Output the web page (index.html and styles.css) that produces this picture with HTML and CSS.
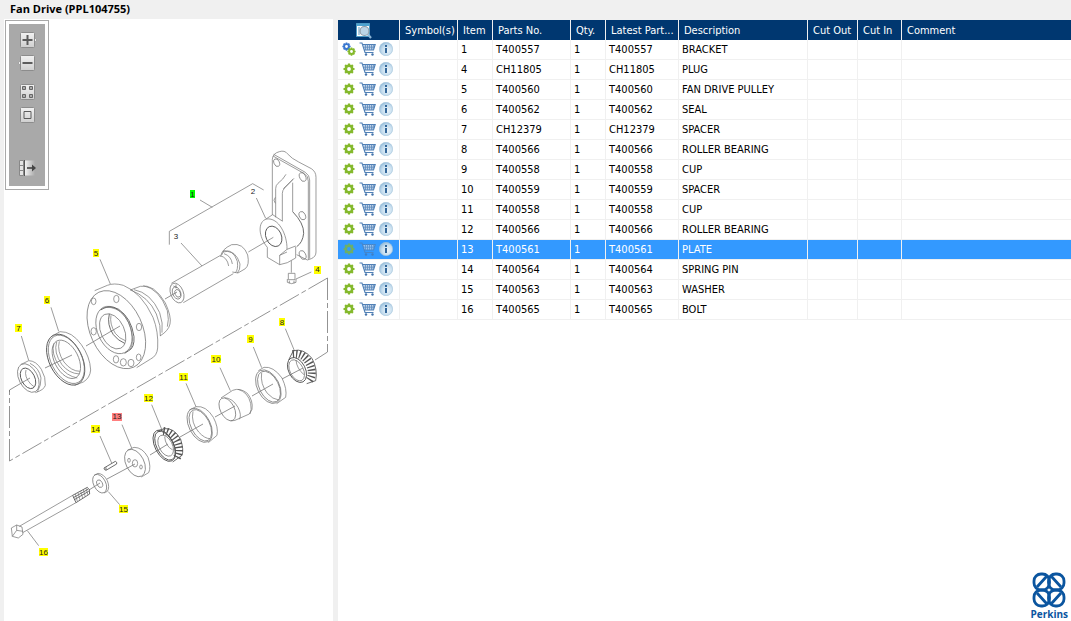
FILE: index.html
```html
<!DOCTYPE html>
<html lang="en">
<head>
<meta charset="utf-8">
<title>Fan Drive (PPL104755)</title>
<link rel="stylesheet" href="styles.css">
</head>
<body>
<svg class="sprite" aria-hidden="true">
  <defs>
    <linearGradient id="btn" x1="0" y1="0" x2="0" y2="1"><stop offset="0" stop-color="#f2f2f2"/><stop offset="1" stop-color="#cfcfcf"/></linearGradient>
    <linearGradient id="fade"><stop offset="0" stop-color="#f2f2f2"/><stop offset="1" stop-color="#a9a9a9"/></linearGradient>
    <radialGradient id="ball" cx=".6" cy=".6" r=".65"><stop offset="0" stop-color="#eef6fb"/><stop offset=".6" stop-color="#c5ddee"/><stop offset="1" stop-color="#8fb8d8"/></radialGradient>
  </defs>
  <symbol id="gear" viewBox="0 0 12 12">
    <circle cx="6" cy="6" r="3.200" fill="none" stroke="currentColor" stroke-width="2.600"/>
    <path d="M6 .5V3M6 9v2.500M.5 6H3M9 6h2.500M2.100 2.100l1.800 1.800M8.100 8.100l1.800 1.800M9.900 2.100L8.100 3.900M3.900 8.100L2.100 9.900" stroke="currentColor" stroke-width="2.200"/>
  </symbol>
  <symbol id="cart" viewBox="0 0 17 14">
    <path d="M4 2.500h12l-1.500 5.500H5.500z" fill="#c3d4e8"/>
    <path d="M.5 1h2.500L6 10.500h8.500M4 2.500h12.200L14.500 8H5.500" fill="none" stroke="#4f7fb5" stroke-width="1.100"/>
    <path d="M6.500 2.500v5.500M8.500 2.500v5.500M10.500 2.500v5.500M12.500 2.500v5.500M14.500 2.500L14 8M4.500 5.200h11" fill="none" stroke="#5e8bbd" stroke-width=".8"/>
    <circle cx="7" cy="12.500" r="1.200" fill="#4474ab"/><circle cx="13.500" cy="12.500" r="1.200" fill="#4474ab"/>
  </symbol>
  <symbol id="info" viewBox="0 0 14 14">
    <circle cx="7" cy="7" r="6.700" fill="url(#ball)" stroke="#a5c4dc" stroke-width=".6"/>
    <path d="M6 3h2v2H6zM6 6h2v5H6z" fill="#34689b"/>
  </symbol>
</svg>

<div class="app">
  <h1 class="title">Fan Drive (PPL104755)</h1>
  <main class="panes">
    <section class="drawing" aria-label="Exploded drawing">
      <svg class="sheet" viewBox="4 19 329 602" role="img" aria-label="Fan drive parts">
        <g class="line">
          <path class="chain" d="M327.500 278V352M327.500 278L9.500 461M9.500 461V390"/>
          <path d="M327.500 352L315 360M9.500 392v-2L30 378"/>
          <path d="M303 368L282 379M273 384L252 396M235 406L215 417M203 424L180 437M168 444L150 455M135 464L107 479M100 483L89 490M45 368L72 355M86 346L120 326M165 299L177 292"/>
        </g>

        <g class="line big" transform="translate(150 140) scale(.33333)">
          <path d="M58 314V274L308 131l33 19M150 180l37 22M319 174l28 61M93 309l63 69M295 336l75-44M424 362v36M438 417l46-21"/>
          <path d="M367 225V58Q368 40 388 35Q404 30 412 41Q425 56 446 66L484 86Q498 95 498 112V336Q498 350 484 356L472 360L440 344M369 48L463 101Q475 108 475 124V358M371 43L466 97Q479 106 479 120V356"/>
          <ellipse cx="380" cy="68" rx="8" ry="12" transform="rotate(-25 380 68)"/>
          <ellipse cx="458" cy="111" rx="9" ry="14" transform="rotate(-25 458 111)"/>
          <ellipse cx="457" cy="227" rx="9" ry="13" transform="rotate(-25 457 227)"/>
          <ellipse cx="458" cy="345" rx="9" ry="14" transform="rotate(-25 458 345)"/>
          <path d="M376 172q-8 8 0 18M408 103Q400 118 384 130Q377 136 377 146V232M432 115L404 144Q397 151 397 160V243M429 118L400 146M428 128V215"/>
          <path class="dark" d="M428 215Q462 250 461 280Q458 308 440 320"/>
          <path d="M352 322C325 290 322 244 350 237C386 232 412 284 411 328L389 346V374L352 352V322M348 237L368 224L398 244M411 328L437 318M389 374L412 368L437 354V320M389 346L411 336"/>
          <ellipse class="dark" cx="371" cy="289" rx="23" ry="32" transform="rotate(-25 371 289)"/>
          <path d="M415 400h20v19h-20zM412 417v10q13 8 26 0v-10M418 422v8M432 422v8"/>
          <path d="M64 430L210 347M100 488L250 401M212 350Q214 328 245 314Q280 308 293 345Q299 375 286 386L264 399L247 396M215 345L222 332Q258 330 270 372Q271 390 262 399M218 336Q250 326 262 364Q265 390 256 398M210 347Q232 352 236 378M222 341Q244 348 247 372"/>
          <ellipse cx="81" cy="459" rx="19" ry="31" transform="rotate(-22 81 459)"/>
          <ellipse cx="80" cy="459" rx="12" ry="19" transform="rotate(-22 80 459)"/>
          <ellipse cx="83" cy="460" rx="8" ry="12" transform="rotate(-22 83 460)"/>
          <path d="M70 438l12 5M78 433v12"/>
        </g>

        <g class="line big" transform="translate(0 240) scale(.33333)">
          <path d="M300 58l31 74M153 202l23 72M64 288l22 73"/>
          <ellipse cx="349" cy="269" rx="78" ry="124" transform="rotate(-25 349 269)"/>
          <path d="M284 152L322 136Q342 128 370 136Q425 158 459 232Q476 275 473 324Q471 348 452 357L410 383M391 150L421 139Q462 130 496 189Q515 230 510 252Q506 272 480 288M391 150Q446 170 469 222Q484 258 481 288M402 149Q452 158 479 218Q490 250 486 278M430 137Q478 146 502 212Q508 240 502 260"/>
          <ellipse cx="342" cy="270" rx="49" ry="75" transform="rotate(-25 342 270)"/>
          <path class="dark" d="M302 210Q326 192 356 208Q394 234 402 290Q404 324 386 332L374 340"/>
          <path d="M308 205Q332 196 360 214Q392 240 397 292Q399 318 388 331"/>
          <ellipse cx="338" cy="274" rx="35" ry="56" transform="rotate(-25 338 274)"/>
          <path class="dark" d="M328 222Q320 254 340 284Q354 302 374 310"/>
          <path d="M333 226Q328 252 346 280Q358 296 376 302"/>
          <g><ellipse cx="281" cy="184" rx="7" ry="10"/><ellipse cx="349" cy="177" rx="8" ry="11"/><ellipse cx="417" cy="261" rx="8" ry="11"/><ellipse cx="281" cy="274" rx="8" ry="11"/><ellipse cx="348" cy="358" rx="8" ry="11"/><ellipse cx="370" cy="367" rx="9" ry="11"/><ellipse cx="393" cy="369" rx="9" ry="11"/><ellipse cx="416" cy="352" rx="7" ry="10"/></g>
          <ellipse class="dark" cx="197" cy="359" rx="49" ry="82" transform="rotate(-27 197 359)"/>
          <ellipse cx="199" cy="358" rx="46" ry="78" transform="rotate(-27 199 358)"/>
          <ellipse cx="199" cy="358" rx="36" ry="62" transform="rotate(-27 199 358)"/>
          <path d="M155 289L180 275Q216 274 244 314Q270 350 272 390Q270 414 250 426L224 436M162 310Q152 340 178 378Q200 408 232 414M170 306Q160 338 186 374Q206 400 238 402M178 304Q170 334 192 366Q214 394 240 394"/>
          <ellipse cx="85" cy="414" rx="28" ry="46" transform="rotate(-27 85 414)"/>
          <ellipse class="dark" cx="84" cy="415" rx="20" ry="33" transform="rotate(-27 84 415)"/>
          <path d="M62 374L86 362Q108 362 124 388Q138 412 136 436Q132 450 106 458M78 390Q72 410 92 432L102 440M90 370Q118 384 123 414Q124 436 112 456"/>
        </g>

        <g class="line big" transform="translate(160 310) scale(.33333)">
          <path d="M376 56l28 68M280 111l25 62M180 173l31 69M78 220l30 70"/>
          <path class="rollers" d="M398 132Q430 128 448 160Q464 192 446 213"/>
          <path class="dark" d="M386 150L400 122Q430 114 456 145Q474 178 467 212L440 221"/>
          <ellipse class="dark" cx="411" cy="180" rx="25" ry="40" transform="rotate(-27 411 180)"/>
          <ellipse cx="410" cy="181" rx="20" ry="34" transform="rotate(-27 410 181)"/>
          <path d="M408 150Q410 176 432 194"/>
          <ellipse cx="325" cy="230" rx="33" ry="54" transform="rotate(-27 325 230)"/>
          <ellipse cx="327" cy="230" rx="29" ry="50" transform="rotate(-27 327 230)"/>
          <path d="M295 182L312 172Q340 168 366 204Q382 238 377 262L350 281M305 188Q300 222 322 250Q338 268 356 270"/>
          <ellipse cx="202" cy="298" rx="21" ry="37" transform="rotate(-27 202 298)"/>
          <path d="M183 264L218 241Q240 232 262 250Q280 272 276 298L268 312L225 331L212 333M193 263Q218 264 234 292Q246 316 238 328M234 238Q264 246 272 280Q276 300 270 312"/>
          <ellipse cx="119" cy="346" rx="32" ry="55" transform="rotate(-27 119 346)"/>
          <ellipse cx="121" cy="346" rx="28" ry="51" transform="rotate(-27 121 346)"/>
          <path d="M88 300L108 290Q138 286 160 322Q176 352 171 376L145 398M99 304Q92 338 116 366Q134 386 150 386"/>
        </g>

        <g class="line big" transform="translate(0 390) scale(.33333)">
          <path d="M455 44l31 76M366 104l29 70M300 138l35 81M325 305l34 39M82 422l34 45"/>
          <path class="rollers" d="M490 123Q516 126 531 154Q544 184 528 207"/>
          <path class="dark" d="M472 124L492 116Q522 112 542 148Q552 180 546 196L518 216"/>
          <ellipse class="dark" cx="493" cy="167" rx="28" ry="51" transform="rotate(-27 493 167)"/>
          <ellipse class="dark" cx="495" cy="167" rx="25" ry="47" transform="rotate(-27 495 167)"/>
          <ellipse cx="497" cy="167" rx="20" ry="34" transform="rotate(-27 497 167)"/>
          <path d="M494 140Q496 168 518 180"/>
          <ellipse cx="405" cy="219" rx="27" ry="44" transform="rotate(-27 405 219)"/>
          <path d="M382 181L402 172Q428 172 444 202Q454 232 446 248L424 261"/>
          <ellipse cx="405" cy="220" rx="8" ry="11"/><ellipse cx="387" cy="211" rx="4" ry="6"/><ellipse cx="423" cy="231" rx="4" ry="6"/>
          <path class="dark" d="M312 234L346 214Q352 216 350 222L318 241Q312 240 312 234M318 232v8"/>
          <ellipse cx="299" cy="281" rx="18" ry="30" transform="rotate(-27 299 281)"/>
          <ellipse cx="299" cy="281" rx="8" ry="12" transform="rotate(-27 299 281)"/>
          <path d="M282 256L294 250Q312 252 322 272Q330 292 322 304L312 309"/>
          <path d="M58 409L218 316M68 428L228 338M34 414L50 405L66 411L69 433L55 444L37 439ZM50 405V421L69 424M50 421L37 439"/>
          <path class="dark" d="M218 316L262 292Q270 296 269 312L228 338ZM220 323L264 298M223 329L266 304"/>
          <path d="M226 312l6 22M234 308l6 22M242 303l6 22M250 299l6 22M258 295l6 20"/>
        </g>

        <g class="tags">
          <rect class="green" x="190" y="190" width="5" height="8"/>
          <rect x="314" y="266" width="7" height="8"/><rect x="93" y="249" width="6" height="8"/><rect x="44" y="296" width="6" height="8"/><rect x="15" y="324" width="7" height="8"/><rect x="279" y="318" width="6" height="8"/><rect x="247" y="335" width="7" height="8"/><rect x="211" y="355" width="10" height="8"/><rect x="179" y="373" width="9" height="8"/><rect x="144" y="394" width="9" height="8"/><rect x="91" y="425" width="9" height="8"/><rect x="119" y="505" width="9" height="8"/><rect x="39" y="548" width="9" height="8"/>
          <rect class="red" x="112" y="413" width="10" height="8"/>
          <text x="192.500" y="197">1</text><text x="253" y="194">2</text><text x="176" y="239">3</text><text x="317.500" y="272">4</text><text x="96" y="256">5</text><text x="47" y="303">6</text><text x="18.500" y="331">7</text><text x="282" y="325">8</text><text x="250.500" y="342">9</text><text x="216" y="362">10</text><text x="183.500" y="380">11</text><text x="148.500" y="401">12</text><text x="117" y="419">13</text><text x="95.500" y="432">14</text><text x="123.500" y="512">15</text><text x="43.500" y="555">16</text>
        </g>
      </svg>

      <div class="toolbar" role="toolbar" aria-label="Drawing tools">
        <button aria-label="Zoom in"><svg viewBox="0 0 19 16"><path d="M16 5l3 3-3 3z" fill="#eee" stroke="#888" stroke-width=".6"/><rect x="2.500" y=".5" width="14" height="15" rx="1" fill="url(#btn)" stroke="#8c8c8c"/><path d="M9.500 3v10M4.500 8h10" stroke="#5c5c5c" stroke-width="2"/></svg></button>
        <button aria-label="Zoom out"><svg viewBox="0 0 19 16"><path d="M3 5L0 8l3 3z" fill="#eee" stroke="#888" stroke-width=".6"/><rect x="2.500" y=".5" width="14" height="15" rx="1" fill="url(#btn)" stroke="#8c8c8c"/><path d="M4.500 8h10" stroke="#5c5c5c" stroke-width="2"/></svg></button>
        <button class="gap" aria-label="Fit to window"><svg viewBox="0 0 19 16"><rect x="2.500" y=".5" width="14" height="15" rx="1" fill="url(#btn)" stroke="#8c8c8c"/><path d="M4.500 2.500h3v3h-3zM11.500 2.500h3v3h-3zM4.500 10.500h3v3h-3zM11.500 10.500h3v3h-3z" fill="#aaa" stroke="#666"/></svg></button>
        <button aria-label="Actual size"><svg viewBox="0 0 19 16"><rect x="2.500" y=".5" width="14" height="15" rx="1" fill="url(#btn)" stroke="#8c8c8c"/><path d="M6 4.500h7v7H6z" fill="none" stroke="#5c5c5c"/></svg></button>
        <button class="far" aria-label="Hide list"><svg viewBox="0 0 19 16"><path d="M7 .5h10v15H7z" fill="url(#fade)"/><path d="M1.500.5h4v15h-4zM1.500 5.500h4M1.500 10.500h4" fill="#e4e4e4" stroke="#888"/><path d="M6.500 0v16" stroke="#555"/><path d="M9 8h7" stroke="#444" stroke-width="1.600"/><path d="M14 4.500L18 8l-4 3.500z" fill="#444"/></svg></button>
      </div>
    </section>

    <section class="list">
      <table class="parts">
        <colgroup><col class="w-act"><col class="w-sym"><col class="w-item"><col class="w-no"><col class="w-item"><col class="w-late"><col class="w-desc"><col class="w-out"><col class="w-in"><col></colgroup>
        <thead><tr>
          <th><svg class="find" viewBox="0 0 16 16" role="img" aria-label="Search"><path d="M.5.500h13v13H.5z" fill="#fff" stroke="#4c9ac4"/><path d="M1 1h12v2H1z" fill="#4da3d0"/><path d="M2 5h2M2 7h2M2 9h2M2 11h2" stroke="#5b9bc4"/><circle cx="8.500" cy="8" r="4.500" fill="#bcd5e6" stroke="#8f9ba5" stroke-width="1.200"/><path d="M12 11.500l3 3.500" stroke="#8db7d8" stroke-width="2.200"/></svg></th>
          <th>Symbol(s)</th><th>Item</th><th>Parts No.</th><th>Qty.</th><th>Latest Part...</th><th>Description</th><th>Cut Out</th><th>Cut In</th><th>Comment</th>
        </tr></thead>
        <tbody>
          <tr><td><div class="acts"><svg class="gear pair" viewBox="0 0 14 14"><use href="#gear" class="blue" width="9" height="9"/><use href="#gear" x="5" y="5" width="9" height="9"/></svg><button class="cart" aria-label="Add to cart"><svg><use href="#cart"/></svg></button><button class="info" aria-label="Information"><svg><use href="#info"/></svg></button></div></td><td></td><td>1</td><td>T400557</td><td>1</td><td>T400557</td><td>BRACKET</td><td></td><td></td><td></td></tr>
          <tr><td><div class="acts"><svg class="gear"><use href="#gear"/></svg><button class="cart" aria-label="Add to cart"><svg><use href="#cart"/></svg></button><button class="info" aria-label="Information"><svg><use href="#info"/></svg></button></div></td><td></td><td>4</td><td>CH11805</td><td>1</td><td>CH11805</td><td>PLUG</td><td></td><td></td><td></td></tr>
          <tr><td><div class="acts"><svg class="gear"><use href="#gear"/></svg><button class="cart" aria-label="Add to cart"><svg><use href="#cart"/></svg></button><button class="info" aria-label="Information"><svg><use href="#info"/></svg></button></div></td><td></td><td>5</td><td>T400560</td><td>1</td><td>T400560</td><td>FAN DRIVE PULLEY</td><td></td><td></td><td></td></tr>
          <tr><td><div class="acts"><svg class="gear"><use href="#gear"/></svg><button class="cart" aria-label="Add to cart"><svg><use href="#cart"/></svg></button><button class="info" aria-label="Information"><svg><use href="#info"/></svg></button></div></td><td></td><td>6</td><td>T400562</td><td>1</td><td>T400562</td><td>SEAL</td><td></td><td></td><td></td></tr>
          <tr><td><div class="acts"><svg class="gear"><use href="#gear"/></svg><button class="cart" aria-label="Add to cart"><svg><use href="#cart"/></svg></button><button class="info" aria-label="Information"><svg><use href="#info"/></svg></button></div></td><td></td><td>7</td><td>CH12379</td><td>1</td><td>CH12379</td><td>SPACER</td><td></td><td></td><td></td></tr>
          <tr><td><div class="acts"><svg class="gear"><use href="#gear"/></svg><button class="cart" aria-label="Add to cart"><svg><use href="#cart"/></svg></button><button class="info" aria-label="Information"><svg><use href="#info"/></svg></button></div></td><td></td><td>8</td><td>T400566</td><td>1</td><td>T400566</td><td>ROLLER BEARING</td><td></td><td></td><td></td></tr>
          <tr><td><div class="acts"><svg class="gear"><use href="#gear"/></svg><button class="cart" aria-label="Add to cart"><svg><use href="#cart"/></svg></button><button class="info" aria-label="Information"><svg><use href="#info"/></svg></button></div></td><td></td><td>9</td><td>T400558</td><td>1</td><td>T400558</td><td>CUP</td><td></td><td></td><td></td></tr>
          <tr><td><div class="acts"><svg class="gear"><use href="#gear"/></svg><button class="cart" aria-label="Add to cart"><svg><use href="#cart"/></svg></button><button class="info" aria-label="Information"><svg><use href="#info"/></svg></button></div></td><td></td><td>10</td><td>T400559</td><td>1</td><td>T400559</td><td>SPACER</td><td></td><td></td><td></td></tr>
          <tr><td><div class="acts"><svg class="gear"><use href="#gear"/></svg><button class="cart" aria-label="Add to cart"><svg><use href="#cart"/></svg></button><button class="info" aria-label="Information"><svg><use href="#info"/></svg></button></div></td><td></td><td>11</td><td>T400558</td><td>1</td><td>T400558</td><td>CUP</td><td></td><td></td><td></td></tr>
          <tr><td><div class="acts"><svg class="gear"><use href="#gear"/></svg><button class="cart" aria-label="Add to cart"><svg><use href="#cart"/></svg></button><button class="info" aria-label="Information"><svg><use href="#info"/></svg></button></div></td><td></td><td>12</td><td>T400566</td><td>1</td><td>T400566</td><td>ROLLER BEARING</td><td></td><td></td><td></td></tr>
          <tr class="selected"><td><div class="acts"><svg class="gear"><use href="#gear"/></svg><button class="cart" aria-label="Add to cart"><svg><use href="#cart"/></svg></button><button class="info" aria-label="Information"><svg><use href="#info"/></svg></button></div></td><td></td><td>13</td><td>T400561</td><td>1</td><td>T400561</td><td>PLATE</td><td></td><td></td><td></td></tr>
          <tr><td><div class="acts"><svg class="gear"><use href="#gear"/></svg><button class="cart" aria-label="Add to cart"><svg><use href="#cart"/></svg></button><button class="info" aria-label="Information"><svg><use href="#info"/></svg></button></div></td><td></td><td>14</td><td>T400564</td><td>1</td><td>T400564</td><td>SPRING PIN</td><td></td><td></td><td></td></tr>
          <tr><td><div class="acts"><svg class="gear"><use href="#gear"/></svg><button class="cart" aria-label="Add to cart"><svg><use href="#cart"/></svg></button><button class="info" aria-label="Information"><svg><use href="#info"/></svg></button></div></td><td></td><td>15</td><td>T400563</td><td>1</td><td>T400563</td><td>WASHER</td><td></td><td></td><td></td></tr>
          <tr><td><div class="acts"><svg class="gear"><use href="#gear"/></svg><button class="cart" aria-label="Add to cart"><svg><use href="#cart"/></svg></button><button class="info" aria-label="Information"><svg><use href="#info"/></svg></button></div></td><td></td><td>16</td><td>T400565</td><td>1</td><td>T400565</td><td>BOLT</td><td></td><td></td><td></td></tr>
        </tbody>
      </table>
      <div class="brand">
        <svg class="mark" viewBox="0 0 34 36" aria-hidden="true"><g fill="none" stroke="#0b559f" stroke-width="2.800"><rect x="2" y="2" width="15.500" height="16" rx="7"/><rect x="16.500" y="2" width="15.500" height="16" rx="7"/><rect x="2" y="18" width="15.500" height="16" rx="7"/><rect x="16.500" y="18" width="15.500" height="16" rx="7"/><path d="M5 15L14.500 4.500M29 15L19.500 4.500M5 21L14.500 31.500M29 21L19.500 31.500"/></g></svg>
        <span class="name">Perkins</span>
      </div>
    </section>
  </main>
</div>
</body>
</html>
```

FILE: styles.css
```css
* { box-sizing: border-box; }
body { margin: 0; background: #f0f0f0; color: #000; font: 11px/18px "DejaVu Sans Condensed", "DejaVu Sans", sans-serif; }
button { display: block; padding: 0; border: 0; background: none; }
svg { display: block; }
.sprite { position: absolute; width: 0; height: 0; }

.app { display: flex; flex-direction: column; min-height: 100vh; }
.title { margin: 0; padding: 0 10px 1px; font: bold 11px/18px "Open Sans", sans-serif; }
.panes { display: flex; flex: 1; gap: 5px; padding-left: 4px; }

.drawing { position: relative; flex: 0 0 329px; background: #fff; }
.sheet { width: 100%; }
.line { fill: none; stroke: #777; stroke-width: 0.8; }
.line.big { stroke-width: 2.2; }
.line .dark { stroke: #555; stroke-width: 2.6; }
.line .rollers { stroke: #555; stroke-width: 24; stroke-dasharray: 4 6; }
.line .chain { stroke-dasharray: 22 3 5 3; }
.tags { font: 8px "Liberation Sans", sans-serif; text-anchor: middle; fill: #222; }
.tags rect { fill: #ff0; }
.tags .green { fill: #0f0; }
.tags .red { fill: #ff7f7f; }

.toolbar { position: absolute; top: 1px; left: 1px; width: 44px; padding: 11px 10px 13px; border: 1px solid #a9a9a9; background: #a9a9a9; box-shadow: inset 0 0 0 3px #fff; display: flex; flex-direction: column; align-items: center; gap: 7px; }
.toolbar svg { width: 19px; height: 16px; }
.toolbar .gap { margin-top: 6px; }
.toolbar .far { margin-top: 30px; }

.list { flex: 1; min-width: 0; display: flex; flex-direction: column; margin-top: 1px; background: #fff; }
.parts { width: 100%; table-layout: fixed; border-collapse: separate; border-spacing: 0; }
.parts th, .parts td { padding: 0 3px; border-right: 1px solid #f0f0f0; white-space: nowrap; overflow: hidden; text-align: left; font-weight: normal; }
.parts th { height: 20px; padding: 2px 0 0 5px; background: #003770; color: #fff; }
.parts td { height: 20px; border-bottom: 1px solid #f0f0f0; }
.parts th:last-child, .parts td:last-child { border-right: 0; }
.parts .selected td { background: #39f; color: #fff; }
.w-act { width: 62px; }
.w-sym { width: 58px; }
.w-item { width: 35px; }
.w-no { width: 78px; }
.w-late { width: 73px; }
.w-desc { width: 129px; }
.w-out { width: 50px; }
.w-in { width: 44px; }

.find { width: 16px; height: 16px; margin-left: 13px; }
.acts { display: flex; align-items: center; gap: 2px; padding: 0 0 1px 1px; }
.gear { width: 14px; height: 14px; padding: 1px; color: #84b92c; }
.gear.pair { padding: 0; }
.gear .blue { color: #3b78cf; }
.cart { padding: 0 1px; }
.cart svg { width: 17px; height: 14px; }
.info svg { width: 14px; height: 14px; }
.selected .gear, .selected .cart { opacity: 0.7; }

.brand { display: flex; flex-direction: column; align-items: center; align-self: flex-end; margin-top: auto; padding-right: 3px; color: #0b559f; }
.mark { width: 34px; height: 36px; }
.name { font: bold 10px/13px "Open Sans", sans-serif; }
```
